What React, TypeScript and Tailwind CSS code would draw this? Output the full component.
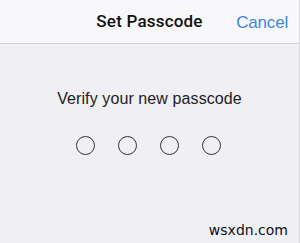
export default function App() {
  const dots = [0, 1, 2, 3];
  return (
    <div className="w-[300px] h-[243px] flex flex-col bg-[#efeff4] border-r border-[#d8d8dc] font-['Liberation_Sans',Arial,sans-serif] overflow-hidden">
      <div className="h-[44px] shrink-0 relative flex items-center justify-center bg-[#f8f8fa] border-b border-[#d4d4d8]">
        <span className="text-[17px] font-medium text-[#111] font-['Roboto',sans-serif] tracking-[0.2px]">Set Passcode</span>
        <span className="absolute right-[11px] top-[10px] text-[17px] text-[#3b87e0] tracking-[-0.2px]">Cancel</span>
      </div>
      <div className="flex-1 flex flex-col items-center">
        <p className="mt-[43px] text-[16px] text-[#222] tracking-[0.1px]">Verify your new passcode</p>
        <div className="mt-[25px] flex gap-[23px] ml-[-2px]">
          {dots.map((d) => (
            <div key={d} className="w-[19px] h-[19px] rounded-full border border-[#333]" />
          ))}
        </div>
        <div className="mt-auto self-end mr-[11px] mb-[2px] text-[14px] text-[#111] font-['DejaVu_Sans',sans-serif]">wsxdn.com</div>
      </div>
    </div>
  );
}
